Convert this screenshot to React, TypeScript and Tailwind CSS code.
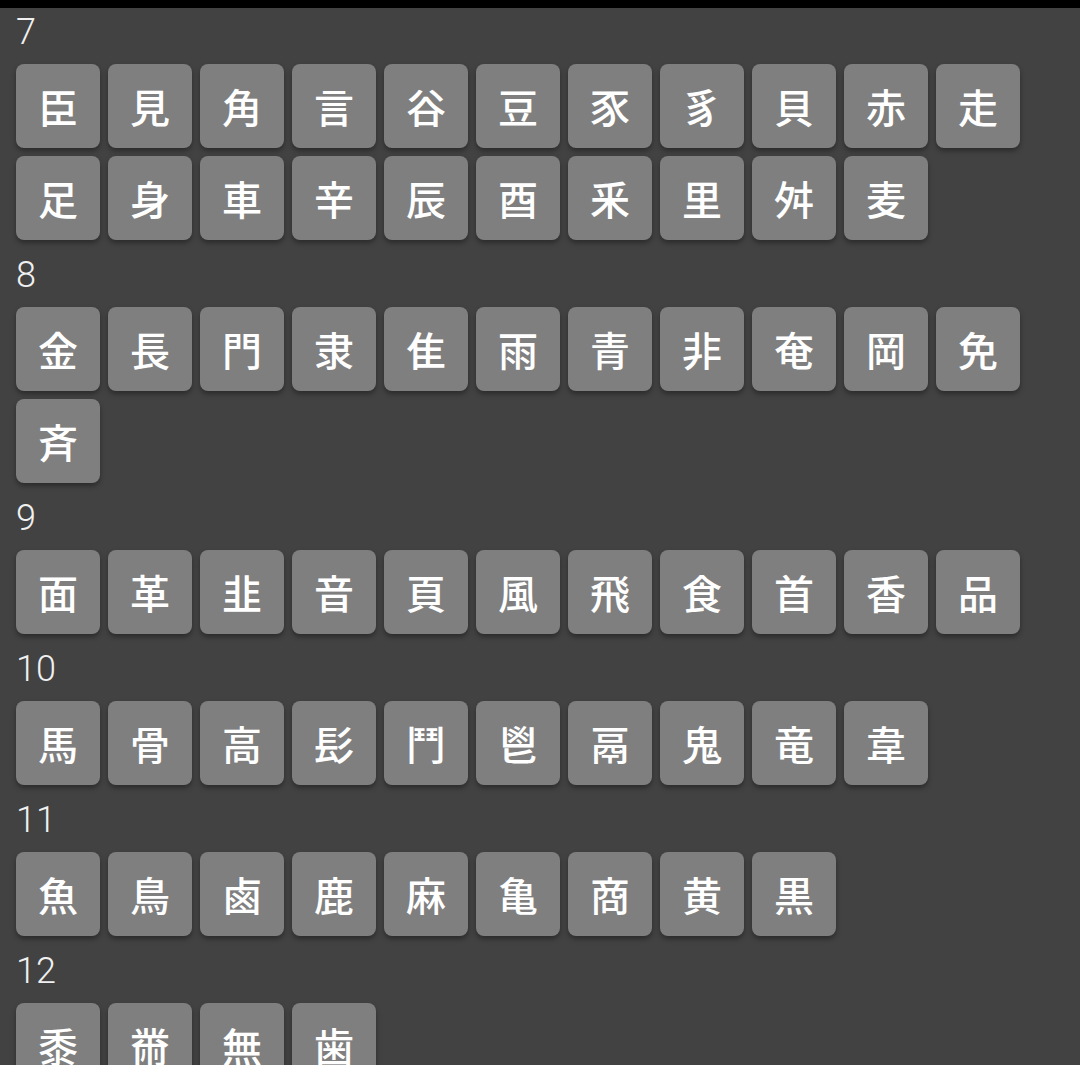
import React from "react";

const sections: { label: string; chars: string[] }[] = [
  { label: "7", chars: ["臣", "見", "角", "言", "谷", "豆", "豕", "豸", "貝", "赤", "走", "足", "身", "車", "辛", "辰", "酉", "釆", "里", "舛", "麦"] },
  { label: "8", chars: ["金", "長", "門", "隶", "隹", "雨", "青", "非", "奄", "岡", "免", "斉"] },
  { label: "9", chars: ["面", "革", "韭", "音", "頁", "風", "飛", "食", "首", "香", "品"] },
  { label: "10", chars: ["馬", "骨", "高", "髟", "鬥", "鬯", "鬲", "鬼", "竜", "韋"] },
  { label: "11", chars: ["魚", "鳥", "鹵", "鹿", "麻", "亀", "商", "黄", "黒"] },
  { label: "12", chars: ["黍", "黹", "無", "歯"] },
];

export default function App() {
  return (
    <div className="w-[1080px] h-[1065px] overflow-hidden bg-[#424242] flex flex-col">
      <div className="h-[8px] bg-black shrink-0" />
      <div className="flex flex-col px-4">
        {sections.map((s) => (
          <div key={s.label} className="flex flex-col mb-[11px]">
            <div
              className="h-[56px] pt-[6px] text-[36px] leading-[36px] font-light text-[#f0f0f0]"
              style={{ fontFamily: "Roboto, 'Noto Sans', sans-serif" }}
            >
              {s.label}
            </div>
            <div className="flex flex-wrap gap-2">
              {s.chars.map((c, i) => (
                <div
                  key={i}
                  className="w-[84px] h-[84px] rounded-lg bg-[#7f7f7f] flex items-center justify-center text-white text-[40px] font-medium shadow-[0_3px_5px_rgba(0,0,0,0.35)]"
                  style={{ fontFamily: "'Noto Sans CJK JP', 'Noto Sans', sans-serif" }}
                >
                  {c}
                </div>
              ))}
            </div>
          </div>
        ))}
      </div>
    </div>
  );
}
